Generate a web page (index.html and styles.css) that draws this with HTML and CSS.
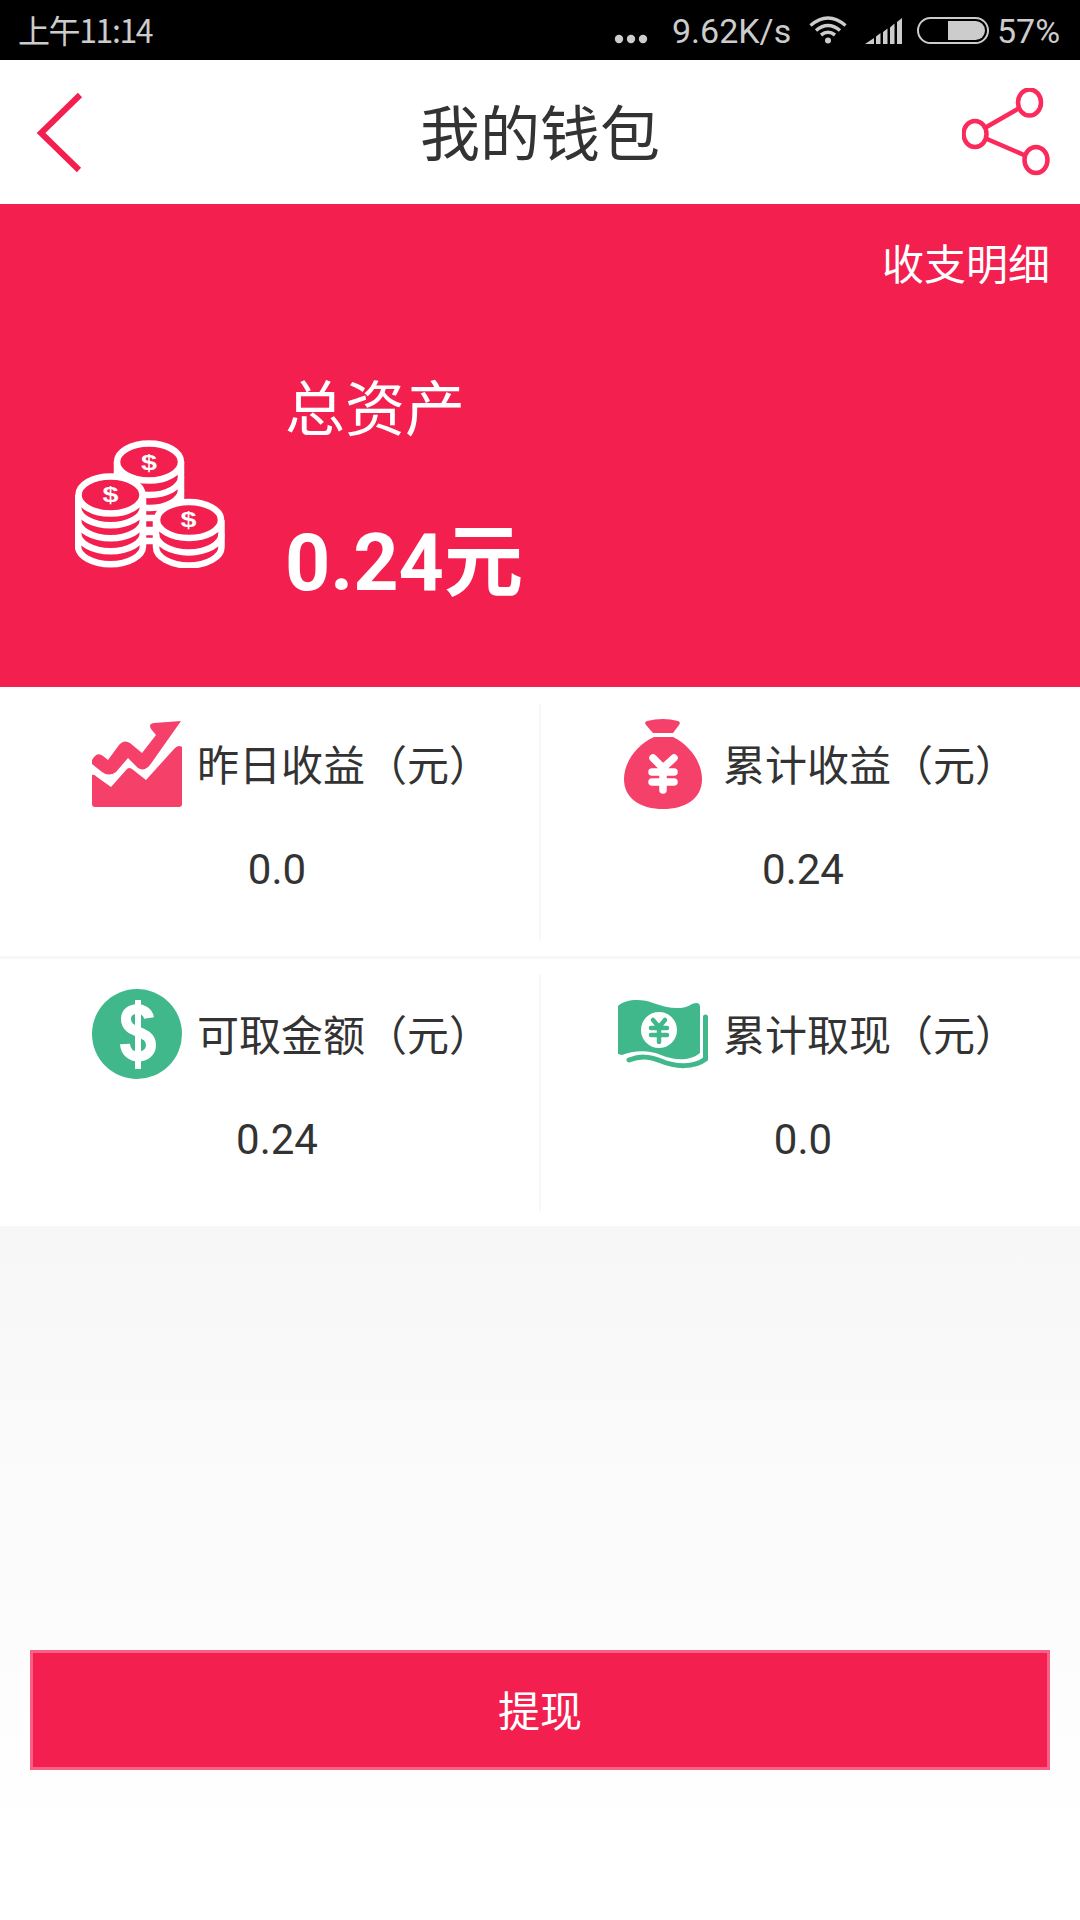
FILE: index.html
```html
<!DOCTYPE html>
<html lang="zh-CN">
<head>
    <meta charset="UTF-8">
    <meta name="viewport" content="width=device-width, initial-scale=1.0">
    <title>我的钱包</title>
    <link rel="stylesheet" href="styles.css">
</head>
<body>
    <div class="status-bar">
        <span class="time">上午11:14</span>
        <svg class="dots" width="34" height="10" viewBox="0 0 34 10"><circle cx="5" cy="5" r="4.2"/><circle cx="17" cy="5" r="4.2"/><circle cx="29" cy="5" r="4.2"/></svg>
        <span class="speed">9.62K/s</span>
        <svg class="wifi" width="38" height="28" viewBox="0 0 38 28">
            <circle cx="19" cy="24.5" r="3"/>
            <path d="M1.5 9.5Q19 -5.5 36.5 9.5M7 14.5Q19 4.5 31 14.5M12 19Q19 13.5 26 19"/>
        </svg>
        <svg class="signal" width="37" height="26" viewBox="0 0 37 26"><path d="M0 26L9 20V26ZM11 26V18.5L15.5 15V26ZM18 26V14L22.5 10.5V26ZM25 26V9.5L29.5 5.5V26ZM32 26V4L37 0V26Z"/></svg>
        <svg class="battery" width="72" height="27" viewBox="0 0 72 27">
            <rect x="1" y="1" width="70" height="25" rx="12.5"/>
            <path d="M31 4H58.5A9.5 9.5 0 0 1 58.5 23H31Z"/>
        </svg>
        <span class="percent">57%</span>
    </div>
    <div class="header">
        <svg class="back" width="48" height="84" viewBox="0 0 48 84"><path d="M44 5L5 43L43 80"/></svg>
        <h1>我的钱包</h1>
        <svg class="share" width="88" height="88" viewBox="0 0 88 88">
            <path d="M24.5 39L57.5 20M25 51L62 67"/>
            <ellipse cx="13" cy="46" rx="11.5" ry="13"/>
            <ellipse cx="67.5" cy="14.5" rx="11.5" ry="13"/>
            <ellipse cx="74" cy="72" rx="11.5" ry="13"/>
        </svg>
    </div>
    <div class="assets">
        <a class="detail">收支明细</a>
        <svg class="coins" width="150" height="128" viewBox="0 0 150 128">
            <!-- back stack -->
            <path class="coin" d="M42 22V92H106V22"/>
            <path class="coin" d="M42 37A32 18 0 0 0 106 37M42 50A32 18 0 0 0 106 50M60 78H85M60 90H85M60 101H85"/>
            <ellipse class="coin" cx="74" cy="22" rx="32" ry="18.5"/>
            <text x="66" y="29.5" textLength="16" lengthAdjust="spacingAndGlyphs">$</text>
            <!-- left stack -->
            <path class="coin" d="M3 55V106A32 18 0 0 0 68 106V55"/>
            <path class="line" d="M3 67A32 18 0 0 0 68 67M3 80A32 18 0 0 0 68 80M3 93A32 18 0 0 0 68 93"/>
            <ellipse class="coin" cx="35.5" cy="55" rx="32" ry="18.5"/>
            <text x="27.5" y="62" textLength="16" lengthAdjust="spacingAndGlyphs">$</text>
            <!-- right stack -->
            <path class="coin" d="M81 80V107A32 18 0 0 0 146.5 107V80"/>
            <path class="line" d="M81 94A32 18 0 0 0 146.5 94"/>
            <ellipse class="coin" cx="114" cy="80" rx="32" ry="18"/>
            <text x="105.5" y="86.5" textLength="16" lengthAdjust="spacingAndGlyphs">$</text>
        </svg>
        <div class="total">
            <div class="total-label">总资产</div>
            <div class="total-value">0.24元</div>
        </div>
    </div>
    <div class="grid">
        <div class="cell">
            <div class="title">
                <svg class="red" width="90" height="90" viewBox="0 0 90 90">
                    <path d="M0 41Q5 32 11 37L16 41L27 26Q32 20 38 24L50 34L64 16L59 10Q56 5 62 4L89 2L58 46Q52 53 46 49L36 39L24 53Q17 58 10 53L0 45Z"/>
                    <path d="M0 56Q2 55 5 58L19 68L35 50Q37 48 40 50L54 61L82 30Q86 25 90 28V85Q90 88 87 88H3Q0 88 0 85Z"/>
                </svg>
                <span>昨日收益（元）</span>
            </div>
            <div class="value">0.0</div>
        </div>
        <div class="cell">
            <div class="title">
                <svg class="red" width="90" height="90" viewBox="0 0 90 90">
                    <path d="M29 2Q45 -2 60 2Q63 3 61 6L55 14H35L28 6Q26 3 29 2Z"/>
                    <path d="M36 18H55C72 26 84 44 84 60C84 80 67 90 45 90C23 90 6 80 6 60C6 44 18 26 36 18Z"/>
                    <path class="yen" d="M35 39L45 49L56 39M45 49V71M34 53H56M34 63H56"/>
                </svg>
                <span>累计收益（元）</span>
            </div>
            <div class="value">0.24</div>
        </div>
        <div class="cell">
            <div class="title">
                <svg class="green" width="90" height="90" viewBox="0 0 90 90">
                    <circle cx="45" cy="45" r="45"/>
                    <path class="dollar" d="M57 29C55 17 34 17 34 30C34 46 59 40 59 56C59 71 34 72 33 55"/>
                    <path class="bar" d="M46 11V80"/>
                </svg>
                <span>可取金额（元）</span>
            </div>
            <div class="value">0.24</div>
        </div>
        <div class="cell">
            <div class="title">
                <svg class="green" width="90" height="90" viewBox="0 0 90 90">
                    <path d="M0 17C8 9 26 10 35 14C50 19 63 22 74 15Q82 12 82 18V64C71 73 55 71 43 66C30 60 14 62 4 66L0 65Z"/>
                    <path class="fold" d="M87.5 28V70C76 79 57 78 43 72C30 67 22 67 11 71"/>
                    <circle class="hole" cx="41" cy="41" r="18"/>
                    <path class="mark" d="M35 31L41 38L47 31M41 38V53M33 39H49M33 46H49"/>
                </svg>
                <span>累计取现（元）</span>
            </div>
            <div class="value">0.0</div>
        </div>
    </div>
    <div class="bottom">
        <button class="withdraw">提现</button>
    </div>
</body>
</html>
```
FILE: styles.css
```css
* {
    box-sizing: border-box;
}
body {
    margin: 0;
    width: 1080px;
    height: 1920px;
    display: flex;
    flex-direction: column;
    font-family: Roboto, "Noto Sans CJK SC", sans-serif;
    color: #333;
    background: #fff;
    overflow: hidden;
}
svg {
    display: block;
    flex: none;
}
.status-bar {
    height: 60px;
    background: #000;
    color: #ccc;
    fill: #ccc;
    display: flex;
    align-items: center;
    padding: 2px 18px 0;
    font-size: 34px;
    white-space: nowrap;
}
.time {
    font-family: "Noto Sans CJK SC", sans-serif;
    font-size: 32px;
    letter-spacing: -1.4px;
    line-height: 40px;
    margin-top: -4px;
    width: 596px;
}
.dots {
    margin-top: 16px;
}
.speed {
    margin-left: 24px;
    width: 120px;
}
.wifi {
    margin-left: 17px;
    margin-top: -3px;
}
.wifi path {
    fill: none;
    stroke: #ccc;
    stroke-width: 3.5;
}
.signal {
    margin-left: 18px;
}
.battery {
    margin-left: 15px;
    margin-top: -2px;
}
.battery rect {
    fill: none;
    stroke: #ccc;
    stroke-width: 2;
}
.percent {
    margin-left: 8px;
}
.header {
    height: 144px;
    display: flex;
    align-items: center;
    justify-content: space-between;
    padding: 0 30px 0 36px;
}
.header h1 {
    margin: -5px 0 0 34px;
    font-size: 60px;
    font-weight: 400;
}
.back path {
    fill: none;
    stroke: #f21f4f;
    stroke-width: 6;
}
.share {
    fill: none;
    stroke: #fa2a5b;
    stroke-width: 4.5;
}
.assets {
    position: relative;
    height: 483px;
    background: #f21f4f;
    color: #fff;
    display: flex;
    padding: 0 0 0 75px;
}
.detail {
    position: absolute;
    top: 27px;
    right: 30px;
    font-size: 42px;
}
.coins {
    margin-top: 236px;
}
.coin {
    fill: #f21f4f;
    stroke: #fff;
    stroke-width: 6.5;
}
.line {
    fill: none;
    stroke: #fff;
    stroke-width: 6.5;
}
.coins text {
    fill: #fff;
    font-family: "Liberation Sans", sans-serif;
    font-size: 22px;
    font-weight: bold;
}
.total {
    margin-left: 60px;
    padding-top: 163px;
}
.total-label {
    font-size: 60px;
    line-height: 88px;
}
.total-value {
    margin-top: 51px;
    font-size: 79px;
    font-weight: bold;
    line-height: 114px;
}
.grid {
    display: grid;
    grid-template-columns: 541px 539px;
    grid-template-rows: 272px 267px;
}
.cell {
    position: relative;
    padding: 30px 0 0 92px;
}
.cell:nth-child(even) {
    padding-left: 77px;
}
.cell:nth-child(-n+2) {
    padding-top: 32px;
    border-bottom: 3px solid #f7f7f7;
}
.cell:nth-child(odd)::after {
    content: "";
    position: absolute;
    top: 15px;
    right: 0;
    width: 2px;
    height: 237px;
    background: #f7f7f7;
}
.cell:first-child::after {
    top: 17px;
}
.title {
    display: flex;
    align-items: center;
    gap: 15px;
    height: 90px;
    font-size: 42px;
    white-space: nowrap;
}
.title span {
    margin-top: -4px;
}
.red {
    fill: #f5406a;
}
.green {
    fill: #41b88c;
}
.yen, .dollar, .bar, .fold, .mark {
    fill: none;
    stroke: #fff;
    stroke-linecap: round;
}
.yen {
    stroke-width: 7.5;
}
.dollar {
    stroke-width: 10;
    stroke-linecap: butt;
}
.bar {
    stroke-width: 6;
    stroke-linecap: butt;
}
.fold {
    stroke: #41b88c;
    stroke-width: 5;
}
.hole {
    fill: #fff;
}
.mark {
    stroke: #41b88c;
    stroke-width: 4.5;
}
.value {
    width: 370px;
    margin-top: 36px;
    font-size: 42px;
    line-height: 50px;
    text-align: center;
}
.bottom {
    flex: 1;
    padding: 424px 30px 0;
    background: linear-gradient(#f7f7f7, #fff 90%);
}
.withdraw {
    display: block;
    width: 100%;
    height: 120px;
    padding: 0 0 4px;
    border: 3px solid #fa6085;
    background: #f21f4f;
    color: #fff;
    font-family: inherit;
    font-size: 42px;
}
```
